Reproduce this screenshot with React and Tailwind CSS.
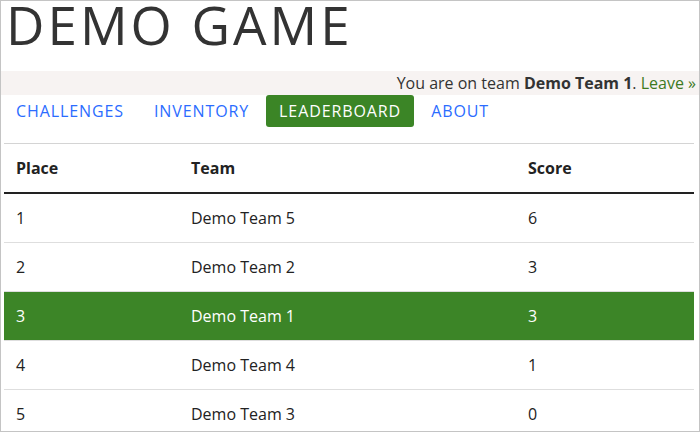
import React from 'react'

const rows = [
    { place: 1, team: "Demo Team 5", score: 6 },
    { place: 2, team: "Demo Team 2", score: 3 },
    { place: 3, team: "Demo Team 1", score: 3, mine: true },
    { place: 4, team: "Demo Team 4", score: 1 },
    { place: 5, team: "Demo Team 3", score: 0 },
];

const links = ["CHALLENGES", "INVENTORY", "LEADERBOARD", "ABOUT"];

const App = () => {
    return (
        <div className="h-[432px] w-[700px] overflow-hidden border border-[#c4c4c4] bg-white font-['Open_Sans',sans-serif] text-[#333]">
            {/* Title */}
            <h1 className="pl-[5px] text-[53px] leading-[48px] tracking-[3px] text-[#333] mb-[22px]">
                DEMO GAME
            </h1>

            {/* Team bar */}
            <div className="h-6 bg-[#f7f3f2] pr-[3px] text-right text-base leading-6">
                You are on team <b className="font-bold">Demo Team 1</b>.{" "}
                <a className="text-[#3d7a1f]">Leave »</a>
            </div>

            {/* Nav */}
            <div className="flex gap-1 pl-[2px]">
                {links.map((l) => (
                    <a
                        key={l}
                        className={`h-8 px-[13px] rounded-[3px] text-base leading-8 tracking-[0.9px] ${
                            l === "LEADERBOARD" ? "bg-[#3b8526] text-white" : "text-[#2b6cff]"
                        }`}
                    >
                        {l}
                    </a>
                ))}
            </div>

            {/* Leaderboard */}
            <table className="mt-4 ml-[3px] w-[690px] border-collapse border-t border-[#d4d4d4] text-base text-[#222]">
                <thead>
                    <tr className="border-b-2 border-[#222]">
                        <th className="w-[175px] p-3 text-left font-bold leading-6">Place</th>
                        <th className="w-[337px] p-3 text-left font-bold leading-6">Team</th>
                        <th className="p-3 text-left font-bold leading-6">Score</th>
                    </tr>
                </thead>
                <tbody>
                    {rows.map((r) => (
                        <tr
                            key={r.place}
                            className={`border-t border-[#dedede] ${r.mine ? "bg-[#3c8527] text-white" : ""}`}
                        >
                            <td className="p-3 leading-6">{r.place}</td>
                            <td className="p-3 leading-6">{r.team}</td>
                            <td className="p-3 leading-6">{r.score}</td>
                        </tr>
                    ))}
                </tbody>
            </table>
        </div>
    );
}

export default App
